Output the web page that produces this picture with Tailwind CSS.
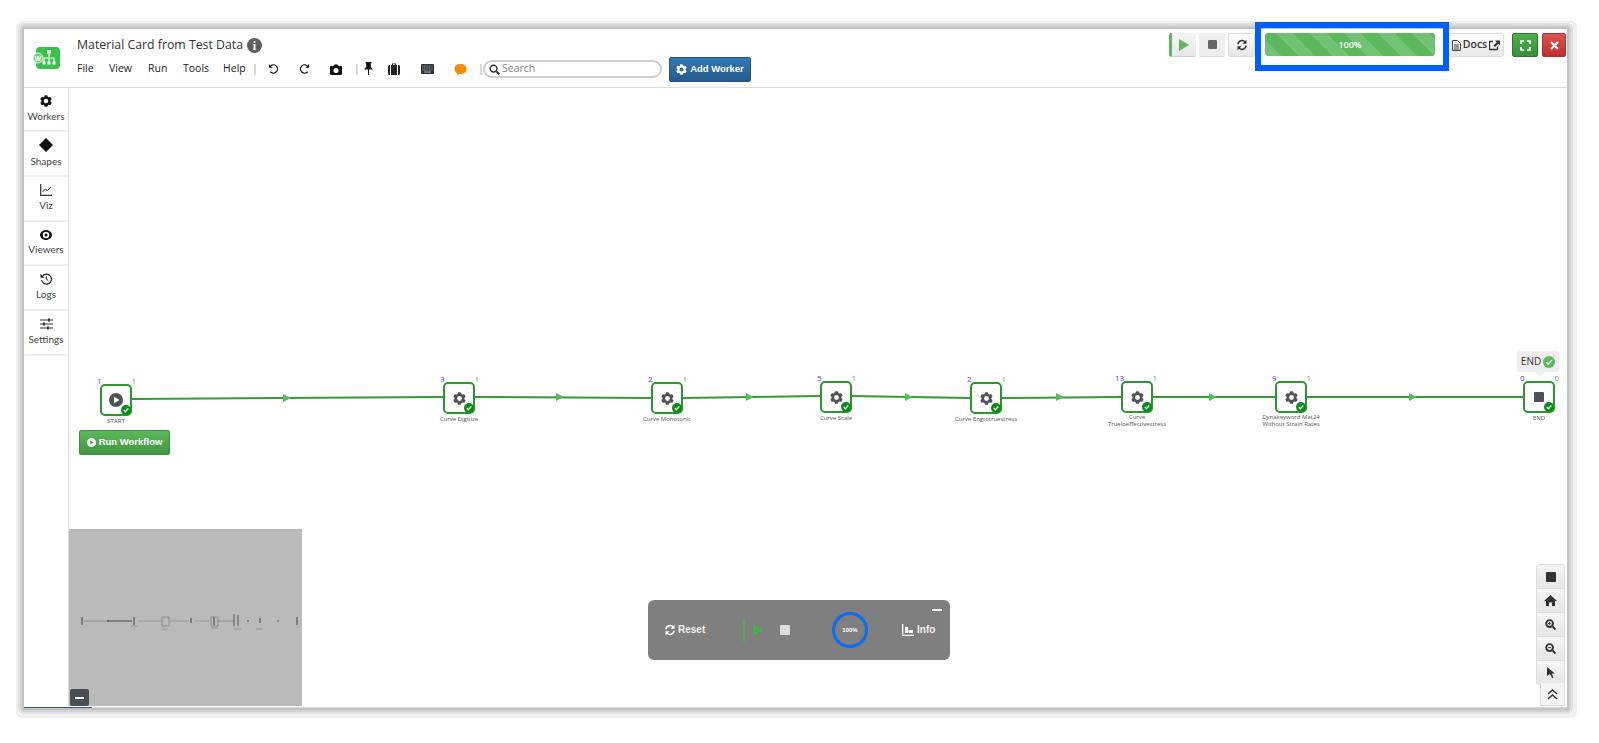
<!DOCTYPE html>
<html lang="en">
<head>
<meta charset="utf-8">
<title>Material Card from Test Data</title>
<script src="https://cdn.jsdelivr.net/npm/@tailwindcss/browser@4"></script>
</head>
<body class="bg-white overflow-hidden font-['Open_Sans','Noto_Sans',sans-serif] text-[#333]">
<svg class="hidden" xmlns="http://www.w3.org/2000/svg">
  <symbol id="gear" viewBox="2 2 20 20"><path fill-rule="evenodd" fill="currentColor" d="M11.078 2.25c-.917 0-1.699.663-1.85 1.567L9.05 4.889c-.02.12-.115.26-.297.348a7.493 7.493 0 0 0-.986.57c-.166.115-.334.126-.45.083L6.3 5.508a1.875 1.875 0 0 0-2.282.819l-.922 1.597a1.875 1.875 0 0 0 .432 2.385l.84.692c.095.078.17.229.154.43a7.598 7.598 0 0 0 0 1.139c.015.2-.059.352-.153.43l-.841.692a1.875 1.875 0 0 0-.432 2.385l.922 1.597a1.875 1.875 0 0 0 2.282.818l1.019-.382c.115-.043.283-.031.45.082.312.214.641.405.985.57.182.088.277.228.297.35l.178 1.071c.151.904.933 1.567 1.85 1.567h1.844c.916 0 1.699-.663 1.85-1.567l.178-1.072c.02-.12.114-.26.297-.349.344-.165.673-.356.985-.57.167-.114.335-.125.45-.082l1.02.382a1.875 1.875 0 0 0 2.28-.819l.923-1.597a1.875 1.875 0 0 0-.432-2.385l-.84-.692c-.095-.078-.17-.229-.154-.43a7.614 7.614 0 0 0 0-1.139c-.016-.2.059-.352.153-.43l.84-.692c.708-.582.891-1.59.433-2.385l-.922-1.597a1.875 1.875 0 0 0-2.282-.818l-1.02.382c-.114.043-.282.031-.449-.083a7.49 7.49 0 0 0-.985-.57c-.183-.087-.277-.227-.297-.348l-.179-1.072a1.875 1.875 0 0 0-1.85-1.567h-1.843ZM12 15.75a3.75 3.75 0 1 0 0-7.5 3.75 3.75 0 0 0 0 7.5Z"/></symbol>
  <symbol id="check" viewBox="0 0 10 10"><circle cx="5" cy="5" r="5" fill="#0d8a1c"/><path d="M2.8 5.1 4.4 6.7 7.3 3.6" fill="none" stroke="#dff5df" stroke-width="1.4"/></symbol>
  <symbol id="sync" viewBox="0 0 16 16"><path fill="none" stroke="currentColor" stroke-width="2" d="M2.6 7A5.5 5.5 0 0 1 12.3 4.2M13.4 9A5.5 5.5 0 0 1 3.7 11.8"/><path fill="currentColor" d="M14 1v5.2H8.8zM2 15V9.8h5.200z"/></symbol>
</svg>

<!-- soft frame around the window, built from nested rings -->
<div class="ml-[16px] mt-[21px] w-fit rounded-[6px] border-t-2 border-l-2 border-r-4 border-b-4 border-[#f0f0f0]">
<div class="rounded-[5px] border-2 border-[#e2e2e2]">
<div class="rounded-[4px] border-2 border-[#d2d2d2]">
<div class="border-2 border-[#c2c2c2]">
<div class="relative w-[1543px] h-[679px] bg-white [filter:blur(0.4px)]">
  <!-- header -->
  <header class="flex h-[59px] items-start justify-between border-b border-[#ddd]">
    <div class="flex">
      <div class="ml-[9px] mt-[18px] w-[27px] h-[22px]">
        <svg width="27" height="22" viewBox="0 0 27 22">
          <rect x="3" y="0" width="24" height="22" rx="4" fill="#39c24a"/>
          <circle cx="5" cy="11" r="5" fill="#6fd17c" stroke="#fff" stroke-width=".8"/>
          <text x="5" y="13.500" text-anchor="middle" font-size="7" font-weight="700" fill="#fff" font-family="Open Sans">W</text>
          <path d="M16 5v5M11 15v-4h10v4M16 11v4" stroke="#fff" fill="none" stroke-width="1.200"/>
          <path d="M14 3h4v3.500h-4zM9.500 14.500h3v3h-3zM14.500 14.500h3v3h-3zM19.500 14.500h3v3h-3z" fill="#fff"/>
        </svg>
      </div>
      <div class="ml-[17px] flex flex-col">
        <div class="mt-[7px] flex h-[19px] items-center gap-[4px] text-[12.300px] leading-none text-[#333]">
          <span>Material Card from Test Data</span>
          <span class="flex h-[15px] w-[15px] items-center justify-center rounded-full bg-[#5f5f5f] font-['Liberation_Serif',serif] text-[12px] font-bold text-white">i</span>
        </div>
        <div class="mt-[1px] flex h-[26px] items-center text-[10.500px] text-[#222]">
          <span class="w-[32px]">File</span>
          <span class="w-[39px]">View</span>
          <span class="w-[35px]">Run</span>
          <span class="w-[40px]">Tools</span>
          <span class="w-[29px]">Help</span>
          <span class="w-[16px] text-[#999]">|</span>
          <svg class="mr-[20px]" width="11" height="12" viewBox="0 0 12 12"><path d="M3 2.500a4.500 4.500 0 1 1-.5 6.500" fill="none" stroke="#111" stroke-width="1.400"/><path d="M1 .5v4h4z" fill="#111"/></svg>
          <svg class="mr-[20px]" width="11" height="12" viewBox="0 0 12 12"><path d="M9 2.500a4.500 4.500 0 1 0 .5 6.500" fill="none" stroke="#111" stroke-width="1.400"/><path d="M11 .5v4H7z" fill="#111"/></svg>
          <svg class="mr-[12px]" width="12" height="11" viewBox="0 0 12 11"><path fill-rule="evenodd" d="M1 2h2.500L4.500.5h3L8.500 2H11a1 1 0 0 1 1 1v7a1 1 0 0 1-1 1H1a1 1 0 0 1-1-1V3a1 1 0 0 1 1-1zm5 2a2.500 2.500 0 1 0 0 5 2.500 2.500 0 0 0 0-5z" fill="#111"/></svg>
          <span class="w-[10px] text-[#999]">|</span>
          <svg class="mr-[15px] mt-[-2px]" width="9" height="13" viewBox="0 0 9 13"><path d="M1.500 0h6v1.200H6.800V5L9 7.500H5v5.500h-1V7.500H0L2.200 5V1.200h-.7z" fill="#111"/></svg>
          <svg class="mr-[21px]" width="12" height="12" viewBox="0 0 12 12"><path fill-rule="evenodd" d="M4 2V.5h4V2h1v10H3V2zm1 0h2v-.7H5zM0 3.500a1.500 1.500 0 0 1 1.500-1.500H2v10h-.5A1.500 1.500 0 0 1 0 10.500zM10 2h.5A1.500 1.500 0 0 1 12 3.500v7a1.500 1.500 0 0 1-1.500 1.500H10z" fill="#222"/></svg>
          <svg class="mr-[20px]" width="13" height="10" viewBox="0 0 13 10"><rect width="13" height="10" rx="1" fill="#333"/><path d="M1.500 2h10M1.500 4h10M1.500 6h10" stroke="#9fb3c8" stroke-width=".9" stroke-dasharray="1 .6"/><path d="M3 8h7" stroke="#9fb3c8"/></svg>
          <svg class="mr-[11px]" width="13" height="13" viewBox="0 0 13 13"><path d="M6.500 1C10 1 12.500 3 12.500 6s-2.500 5-6 5l-1 0L3 12.500l.3-2.200C1.500 9.500.5 8 .5 6 .5 3 3 1 6.500 1z" fill="#f58a07"/></svg>
          <span class="w-[5px] text-[#999]">|</span>
          <div class="flex h-[18px] w-[179px] items-center gap-[2px] rounded-full border-2 border-[#ccc] bg-white pl-[4px]">
            <svg width="11" height="11" viewBox="0 0 12 12"><circle cx="5" cy="5" r="3.700" fill="none" stroke="#333" stroke-width="1.600"/><path d="M8 8l3.200 3.200" stroke="#333" stroke-width="2"/></svg>
            <span class="text-[10.500px] text-[#888]">Search</span>
          </div>
          <button class="ml-[7px] flex h-[25px] w-[82px] items-center justify-center gap-[3px] rounded-[2px] border border-[#245580] bg-gradient-to-b from-[#337ab7] to-[#265a88] font-['Liberation_Sans',sans-serif] text-[9.500px] font-bold text-white">
            <svg width="11" height="11"><use href="#gear"/></svg>Add Worker
          </button>
        </div>
      </div>
    </div>
    <div class="flex items-start pt-[4px] pr-[1px]">
      <button class="flex h-[24px] w-[27px] items-center justify-center rounded-[2px] border-l-[3px] border-b border-l-[#5cb85c] border-b-[#ccc] bg-gradient-to-b from-[#f4f4f4] to-[#e8e8e8]">
        <svg width="10" height="12" viewBox="0 0 10 12"><path d="M0 0l10 6-10 6z" fill="#5cb85c"/></svg>
      </button>
      <button class="ml-[3px] flex h-[24px] w-[26px] items-center justify-center rounded-[2px] border-b border-[#ddd] bg-[#eee]">
        <span class="h-[9px] w-[9px] rounded-[1px] bg-[#666]"></span>
      </button>
      <button class="ml-[3px] flex h-[24px] w-[27px] items-center justify-center rounded-[2px] border border-[#ddd] bg-gradient-to-b from-white to-[#e6e6e6] text-[#333]">
        <svg width="12" height="12"><use href="#sync"/></svg>
      </button>
      <div class="ml-[10px] flex h-[23px] w-[170px] items-center justify-center rounded-[3px] bg-[repeating-linear-gradient(45deg,#72c274_0_12px,#5cb85c_12px_24px)] text-[9px] font-semibold text-white">100%</div>
      <button class="ml-[13px] flex h-[24px] w-[56px] items-center justify-center gap-[2px] rounded-[2px] border border-[#ddd] bg-gradient-to-b from-white to-[#e6e6e6] text-[10.500px] font-semibold text-[#333]">
        <svg width="9" height="11" viewBox="0 0 9 11"><path fill="none" stroke="#444" d="M.5.5h5l3 3v7h-8zM2 5h5M2 7h5M2 9h5"/></svg>Docs
        <svg width="11" height="11" viewBox="0 0 11 11"><path fill="none" stroke="#333" stroke-width="1.300" d="M8.500 6.500v3h-8v-8h3.500"/><path d="M6 .5h5v5L9.300 3.800 6 7 4.500 5.500 7.700 2.200z" fill="#333"/></svg>
      </button>
      <button class="ml-[8px] flex h-[24px] w-[26px] items-center justify-center rounded-[2px] border border-[#2b7a2b] bg-gradient-to-b from-[#4cae4c] to-[#3a8f3a]">
        <svg width="11" height="11" viewBox="0 0 11 11"><path fill="none" stroke="#fff" stroke-width="1.700" d="M1 4V1h3M7 1h3v3M10 7v3H7M4 10H1V7"/></svg>
      </button>
      <button class="ml-[4px] flex h-[24px] w-[24px] items-center justify-center rounded-[2px] border border-[#b92c28] bg-gradient-to-b from-[#d9534f] to-[#c12e2a]">
        <svg width="9" height="9" viewBox="0 0 9 9"><path stroke="#fff" stroke-width="2.200" d="M1 1l7 7M8 1 1 8"/></svg>
      </button>
    </div>
  </header>

  <div class="flex h-[620px] border-b border-[#ddd]">
    <!-- sidebar -->
    <aside class="h-full w-[45px] border-r border-[#ddd] text-center font-['Lato',sans-serif] text-[10px] text-[#444]">
      <div class="flex h-[44px] flex-col items-center justify-center gap-[2px] border-b-2 border-[#eee]">
        <svg class="text-[#111]" width="12" height="12"><use href="#gear"/></svg><span>Workers</span>
      </div>
      <div class="flex h-[45px] flex-col items-center justify-center gap-[2px] border-b-2 border-[#eee]">
        <svg width="14" height="14" viewBox="0 0 14 14"><path d="M7 0l7 7-7 7-7-7z" fill="#111"/></svg><span>Shapes</span>
      </div>
      <div class="flex h-[45px] flex-col items-center justify-center gap-[2px] border-b-2 border-[#eee]">
        <svg width="12" height="12" viewBox="0 0 12 12"><path d="M.7 0v11.300H12" fill="none" stroke="#333" stroke-width="1.200"/><path d="M2.500 8l3-3 2 1.500L11 3" fill="none" stroke="#333"/></svg><span>Viz</span>
      </div>
      <div class="flex h-[44px] flex-col items-center justify-center gap-[2px] border-b-2 border-[#eee]">
        <svg width="12" height="10" viewBox="0 0 12 10"><path fill-rule="evenodd" d="M6 0c3.300 0 6 2.500 6 5s-2.700 5-6 5-6-2.500-6-5 2.700-5 6-5zm0 1.800a3.200 3.200 0 1 0 0 6.400 3.200 3.200 0 0 0 0-6.400zM6 3.500a1.500 1.500 0 1 1 0 3 1.500 1.500 0 0 1 0-3z" fill="#111"/></svg><span>Viewers</span>
      </div>
      <div class="flex h-[45px] flex-col items-center justify-center gap-[2px] border-b-2 border-[#eee]">
        <svg width="12" height="12" viewBox="0 0 12 12"><path d="M2.500 3a5 5 0 1 1-1 4" fill="none" stroke="#222" stroke-width="1.200"/><path d="M.5 .8v4h4z" fill="#222"/><path d="M6.300 3.200v3l2 1.300" fill="none" stroke="#222"/></svg><span>Logs</span>
      </div>
      <div class="flex h-[45px] flex-col items-center justify-center gap-[2px] rounded-b-[3px] border-b-2 border-[#eee]">
        <svg width="13" height="12" viewBox="0 0 13 12"><path d="M0 2h13M0 6h13M0 10h13" stroke="#333"/><path d="M8 .5h2v3H8zM3 4.500h2v3H3zM7 8.500h2v3H7z" fill="#333"/></svg><span>Settings</span>
      </div>
    </aside>

    <!-- canvas -->
    <main class="relative flex-1">
      <svg class="absolute left-0 top-0" width="1498" height="619" viewBox="69 88 1498 619">
        <g fill="none" stroke="#349b37" stroke-width="2">
          <path d="M132 399 443 397"/><path d="M474 397 651 398"/><path d="M682 398 820 396"/><path d="M851 396 970 398"/>
          <path d="M1001 398 1121 397"/><path d="M1152 397 1275 397"/><path d="M1306 397 1523 397"/>
        </g>
        <g fill="#5cb85c">
          <path d="M283 394l8 4-8 4z"/><path d="M556 393l8 4-8 4z"/><path d="M746 393l8 4-8 4z"/><path d="M905 393l8 4-8 4z"/>
          <path d="M1056 393l8 4-8 4z"/><path d="M1209 393l8 4-8 4z"/><path d="M1409 393l8 4-8 4z"/>
        </g>
      </svg>

      <!-- START -->
      <div class="absolute left-[31px] top-[296px] flex h-[32px] w-[32px] items-center justify-center rounded-[5px] border-2 border-[#2c962f] bg-white">
        <svg width="14" height="14" viewBox="0 0 14 14"><path fill-rule="evenodd" d="M7 0a7 7 0 1 1 0 14A7 7 0 0 1 7 0zM5 3.800v6.400L10.500 7z" fill="#4f5258"/></svg>
        <svg class="absolute bottom-[-1px] right-[-1px]" width="10" height="10"><use href="#check"/></svg>
        <span class="absolute left-[-5px] top-[-9px] text-[8px] leading-[8px] text-[#44f]">1</span>
        <span class="absolute right-[-6px] top-[-9px] text-[8px] leading-[8px] text-[#5cb85c]">1</span>
        <span class="absolute left-[-24px] top-[31px] w-[76px] text-center text-[6px] leading-[8px] text-[#555]">START</span>
      </div>

      <button class="absolute left-[10px] top-[342px] flex h-[25px] w-[91px] items-center justify-center gap-[3px] rounded-[2px] border border-[#3e8f3e] bg-gradient-to-b from-[#5cb85c] to-[#419641] font-['Liberation_Sans',sans-serif] text-[9.500px] font-bold text-white">
        <svg width="9" height="9" viewBox="0 0 14 14"><path fill-rule="evenodd" d="M7 0a7 7 0 1 1 0 14A7 7 0 0 1 7 0zM5 3.800v6.400L10.500 7z" fill="#fff"/></svg>Run Workflow
      </button>

      <!-- Curve Digitize -->
      <div class="absolute left-[374px] top-[294px] flex h-[32px] w-[32px] items-center justify-center rounded-[5px] border-2 border-[#2c962f] bg-white text-[#4f5258]">
        <svg width="13" height="13"><use href="#gear"/></svg>
        <svg class="absolute bottom-[-1px] right-[-1px]" width="10" height="10"><use href="#check"/></svg>
        <span class="absolute left-[-5px] top-[-9px] text-[8px] leading-[8px] text-[#44f]">3</span>
        <span class="absolute right-[-6px] top-[-9px] text-[8px] leading-[8px] text-[#5cb85c]">1</span>
        <span class="absolute left-[-24px] top-[31px] w-[76px] text-center text-[6px] leading-[8px] text-[#555]">Curve Digitize</span>
      </div>

      <!-- Curve Monotonic -->
      <div class="absolute left-[582px] top-[294px] flex h-[32px] w-[32px] items-center justify-center rounded-[5px] border-2 border-[#2c962f] bg-white text-[#4f5258]">
        <svg width="13" height="13"><use href="#gear"/></svg>
        <svg class="absolute bottom-[-1px] right-[-1px]" width="10" height="10"><use href="#check"/></svg>
        <span class="absolute left-[-5px] top-[-9px] text-[8px] leading-[8px] text-[#44f]">2</span>
        <span class="absolute right-[-6px] top-[-9px] text-[8px] leading-[8px] text-[#5cb85c]">1</span>
        <span class="absolute left-[-24px] top-[31px] w-[76px] text-center text-[6px] leading-[8px] text-[#555]">Curve Monotonic</span>
      </div>

      <!-- Curve Scale -->
      <div class="absolute left-[751px] top-[293px] flex h-[32px] w-[32px] items-center justify-center rounded-[5px] border-2 border-[#2c962f] bg-white text-[#4f5258]">
        <svg width="13" height="13"><use href="#gear"/></svg>
        <svg class="absolute bottom-[-1px] right-[-1px]" width="10" height="10"><use href="#check"/></svg>
        <span class="absolute left-[-5px] top-[-9px] text-[8px] leading-[8px] text-[#44f]">5</span>
        <span class="absolute right-[-6px] top-[-9px] text-[8px] leading-[8px] text-[#5cb85c]">1</span>
        <span class="absolute left-[-24px] top-[31px] w-[76px] text-center text-[6px] leading-[8px] text-[#555]">Curve Scale</span>
      </div>

      <!-- Curve Engtotruestress -->
      <div class="absolute left-[901px] top-[294px] flex h-[32px] w-[32px] items-center justify-center rounded-[5px] border-2 border-[#2c962f] bg-white text-[#4f5258]">
        <svg width="13" height="13"><use href="#gear"/></svg>
        <svg class="absolute bottom-[-1px] right-[-1px]" width="10" height="10"><use href="#check"/></svg>
        <span class="absolute left-[-5px] top-[-9px] text-[8px] leading-[8px] text-[#44f]">2</span>
        <span class="absolute right-[-6px] top-[-9px] text-[8px] leading-[8px] text-[#5cb85c]">1</span>
        <span class="absolute left-[-24px] top-[31px] w-[76px] text-center text-[6px] leading-[8px] text-[#555]">Curve Engtotruestress</span>
      </div>

      <!-- Curve Trueloeffectivestress -->
      <div class="absolute left-[1052px] top-[293px] flex h-[32px] w-[32px] items-center justify-center rounded-[5px] border-2 border-[#2c962f] bg-white text-[#4f5258]">
        <svg width="13" height="13"><use href="#gear"/></svg>
        <svg class="absolute bottom-[-1px] right-[-1px]" width="10" height="10"><use href="#check"/></svg>
        <span class="absolute left-[-8px] top-[-9px] text-[8px] leading-[8px] text-[#44f]">13</span>
        <span class="absolute right-[-6px] top-[-9px] text-[8px] leading-[8px] text-[#5cb85c]">1</span>
        <span class="absolute left-[-24px] top-[31px] w-[76px] text-center text-[6px] leading-[7px] text-[#555]">Curve<br>Trueloeffectivestress</span>
      </div>

      <!-- Dynakeyword -->
      <div class="absolute left-[1206px] top-[293px] flex h-[32px] w-[32px] items-center justify-center rounded-[5px] border-2 border-[#2c962f] bg-white text-[#4f5258]">
        <svg width="13" height="13"><use href="#gear"/></svg>
        <svg class="absolute bottom-[-1px] right-[-1px]" width="10" height="10"><use href="#check"/></svg>
        <span class="absolute left-[-5px] top-[-9px] text-[8px] leading-[8px] text-[#44f]">9</span>
        <span class="absolute right-[-6px] top-[-9px] text-[8px] leading-[8px] text-[#5cb85c]">1</span>
        <span class="absolute left-[-24px] top-[31px] w-[76px] text-center text-[6px] leading-[7px] text-[#555]">Dynakeyword Mat24 Without Strain Rates</span>
      </div>

      <!-- END -->
      <div class="absolute left-[1454px] top-[293px] flex h-[32px] w-[32px] items-center justify-center rounded-[5px] border-2 border-[#2c962f] bg-white">
        <span class="h-[10px] w-[10px] rounded-[1px] bg-[#4f5258]"></span>
        <svg class="absolute bottom-[-1px] right-[-1px]" width="10" height="10"><use href="#check"/></svg>
        <span class="absolute left-[-5px] top-[-9px] text-[8px] leading-[8px] text-[#44f]">0</span>
        <span class="absolute right-[-6px] top-[-9px] text-[8px] leading-[8px] text-[#5cb85c]">0</span>
        <span class="absolute left-[-24px] top-[31px] w-[76px] text-center text-[6px] leading-[8px] text-[#555]">END</span>
      </div>

      <!-- END tooltip -->
      <div class="absolute left-[1448px] top-[263px] flex h-[21px] w-[42px] items-center justify-center gap-[2px] rounded-[3px] bg-[#eee] text-[10px] text-[#333]">
        <span>END</span>
        <svg width="12" height="12" viewBox="0 0 12 12"><circle cx="6" cy="6" r="6" fill="#5cb85c"/><path d="M3.200 6.200 5.200 8 8.800 4.200" fill="none" stroke="#fff" stroke-width="1.500"/></svg>
        <span class="absolute bottom-[-5px] left-[17px] h-0 w-0 border-x-[6px] border-t-[6px] border-x-transparent border-t-[#eee]"></span>
      </div>

      <!-- minimap -->
      <div class="absolute bottom-[1px] left-0 h-[177px] w-[233px] bg-[#b9babc]">
        <svg class="absolute left-0 top-0 [filter:blur(0.6px)]" width="233" height="177" viewBox="0 0 233 177">
          <path d="M15 92H63" stroke="#77787a" stroke-width=".7"/><path d="M39 92H63" stroke="#616264" stroke-width="1"/><path d="M69 92H95M101 92H120M126 92H142" stroke="#8a8b8d" stroke-width=".7"/><path d="M149 92H165" stroke="#77787a" stroke-width=".7"/>
          <path d="M13 88v8M65 88v8M122 89v5M145 88v8M191 89v5M228 88v8" stroke="#55565a" stroke-width="1.200"/>
          <circle cx="39" cy="92" r="1" fill="#55565a"/><circle cx="179" cy="92" r="1" fill="#6a6b6d"/><circle cx="209" cy="92" r="1" fill="#77787a"/>
          <path d="M93 88h7v9h-7zM142 88h7v9h-7z" stroke="#77787a" stroke-width=".7" fill="none"/>
          <path d="M165 85v12M169 86v11" stroke="#5a5b5f" stroke-width="1"/>
          <path d="M62 97h7M93 100h6M142 99h7M165 100h7M187 100h7" stroke="#96979a" stroke-width="1"/>
        </svg>
        <button class="absolute bottom-0 left-[1px] flex h-[17px] w-[19px] items-center justify-center rounded-[2px] bg-[#4a4d52]">
          <span class="h-[2px] w-[9px] bg-white"></span>
        </button>
      </div>

      <!-- run panel -->
      <div class="absolute left-[579px] top-[512px] flex h-[60px] w-[302px] items-center rounded-[6px] bg-[#7f7f7f] font-['Liberation_Sans',sans-serif] text-[10px] font-bold text-[#f2f2f2]">
        <span class="absolute right-[8px] top-[9px] h-[2px] w-[10px] bg-white"></span>
        <svg class="ml-[16px] mt-[-1px] text-white" width="12" height="12"><use href="#sync"/></svg>
        <span class="ml-[2px] mt-[-1px] w-[39px]">Reset</span>
        <span class="ml-[26px] h-[23px] w-[2px] bg-[#4cae4c]"></span>
        <svg class="ml-[8px] mt-[-1px]" width="10" height="12" viewBox="0 0 10 12"><path d="M0 0l10 6-10 6z" fill="#4cae4c"/></svg>
        <span class="ml-[17px] mt-[-1px] h-[10px] w-[10px] rounded-[1px] bg-[#ddd]"></span>
        <div class="ml-[42px] flex h-[36px] w-[36px] items-center justify-center rounded-full border-[3px] border-[#0a6cf5] text-[6px] font-bold text-white">100%</div>
        <svg class="ml-[34px] mt-[-1px]" width="12" height="12" viewBox="0 0 12 12"><path d="M.7 0v11.300H12" fill="none" stroke="#fff" stroke-width="1.300"/><path d="M3 3h3v6H3zM6.500 6H11v3H6.500z" fill="#fff"/></svg>
        <span class="ml-[3px] mt-[-1px]">Info</span>
      </div>

      <!-- zoom tools -->
      <div class="absolute right-[2px] top-[476px] flex w-[29px] flex-col items-center overflow-hidden rounded-[3px] border border-[#ddd] bg-[#eee]">
        <div class="flex h-[24px] w-full items-center justify-center border-b border-[#ddd] bg-gradient-to-b from-[#f5f5f5] to-[#e6e6e6]"><span class="h-[10px] w-[10px] rounded-[1px] bg-[#333]"></span></div>
        <div class="flex h-[24px] w-full items-center justify-center border-b border-[#ddd] bg-gradient-to-b from-[#f5f5f5] to-[#e6e6e6]"><svg width="13" height="11" viewBox="0 0 13 11"><path d="M6.500 0 13 6h-2v5H8V7.500H5V11H2V6H0z" fill="#333"/></svg></div>
        <div class="flex h-[24px] w-full items-center justify-center border-b border-[#ddd] bg-gradient-to-b from-[#f5f5f5] to-[#e6e6e6]"><svg width="11" height="11" viewBox="0 0 12 12"><circle cx="5" cy="5" r="3.700" fill="none" stroke="#333" stroke-width="2"/><path d="M8 8l3.500 3.500" stroke="#333" stroke-width="2"/><path d="M3.300 5h3.400M5 3.300v3.400" stroke="#333"/></svg></div>
        <div class="flex h-[24px] w-full items-center justify-center border-b border-[#ddd] bg-gradient-to-b from-[#f5f5f5] to-[#e6e6e6]"><svg width="11" height="11" viewBox="0 0 12 12"><circle cx="5" cy="5" r="3.700" fill="none" stroke="#333" stroke-width="2"/><path d="M8 8l3.500 3.500" stroke="#333" stroke-width="2"/><path d="M3.300 5h3.400" stroke="#333"/></svg></div>
        <div class="flex h-[23px] w-full items-center justify-center bg-gradient-to-b from-[#f5f5f5] to-[#e6e6e6]"><svg width="8" height="11" viewBox="0 0 8 11"><path d="M0 0l8 6.500H4.800L6.500 10.500 5 11 3 7 0 9z" fill="#333"/></svg></div>
      </div>
      <div class="absolute right-[2px] top-[595px] flex h-[23px] w-[25px] items-center justify-center border border-t-0 border-[#ddd] bg-[#f4f4f4]">
        <svg width="11" height="11" viewBox="0 0 11 11"><path d="M1 5 5.500 1 10 5M1 10 5.500 6 10 10" fill="none" stroke="#333" stroke-width="1.400"/></svg>
      </div>
    </main>
  </div>

  <!-- bottom tab line -->
  <span class="absolute bottom-0 left-0 h-[1px] w-[68px] bg-[#2d5a94]"></span>

  <!-- annotation frame -->
  <div class="absolute left-[1231px] top-[-7px] h-[49px] w-[194px] border-[6px] border-[#0060ff]"></div>
</div>
</div>
</div>
</div>
</div>
</body>
</html>
